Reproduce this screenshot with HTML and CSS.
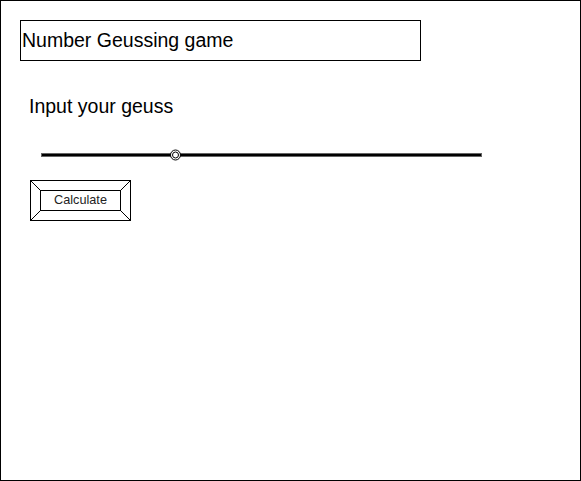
FILE: index.html
```html
<!DOCTYPE html>
<html>
<head>
<meta charset="utf-8">
<link rel="stylesheet" href="styles.css">
</head>
<body>
<div class="frame">
  <div class="title">Number Geussing game</div>
  <div class="label">Input your geuss</div>
  <svg class="slider" width="446" height="12" viewBox="0 0 446 12">
    <rect x="2.5" y="4.5" width="440" height="3" fill="#000" stroke="#666" stroke-width="1"/>
    <circle cx="136.5" cy="6" r="5" fill="#fff" stroke="#000" stroke-width="1"/>
    <circle cx="136.5" cy="6" r="3" fill="#fff" stroke="#000" stroke-width="1"/>
  </svg>
  <div class="btn">
    <svg class="btn-deco" width="101" height="41" viewBox="0 0 101 41">
      <rect x="0.5" y="0.5" width="100" height="40" fill="#fff" stroke="#000"/>
      <rect x="10.5" y="10.5" width="80" height="20" fill="#fff" stroke="#000"/>
      <line x1="0.5" y1="0.5" x2="10.5" y2="10.5" stroke="#000"/>
      <line x1="100.5" y1="0.5" x2="90.5" y2="10.5" stroke="#000"/>
      <line x1="0.5" y1="40.5" x2="10.5" y2="30.5" stroke="#000"/>
      <line x1="100.5" y1="40.5" x2="90.5" y2="30.5" stroke="#000"/>
    </svg>
    <span class="btn-text">Calculate</span>
  </div>
</div>
</body>
</html>
```
FILE: styles.css
```css
html, body {
  margin: 0;
  padding: 0;
  background: #fff;
}
body {
  font-family: "Liberation Sans", Arial, sans-serif;
  color: #000;
}
.frame {
  width: 581px;
  height: 481px;
  box-sizing: border-box;
  border: 1px solid #000;
  padding: 19px 0 0 19px;
  display: flex;
  flex-direction: column;
  align-items: flex-start;
}
.title {
  width: 401px;
  height: 41px;
  box-sizing: border-box;
  border: 1px solid #000;
  display: flex;
  align-items: center;
  padding-left: 1px;
  font-size: 19.5px;
}
.label {
  margin-top: 35px;
  margin-left: 9px;
  font-size: 19.5px;
  line-height: 20px;
}
.slider {
  display: block;
  margin-top: 33px;
  margin-left: 19px;
}
.btn {
  position: relative;
  margin-top: 19px;
  margin-left: 10px;
  width: 101px;
  height: 41px;
  display: flex;
  align-items: center;
  justify-content: center;
}
.btn-deco {
  position: absolute;
  left: 0;
  top: 0;
}
.btn-text {
  position: relative;
  top: -1px;
  font-size: 12.7px;
  line-height: 14px;
  color: #222;
}
```
